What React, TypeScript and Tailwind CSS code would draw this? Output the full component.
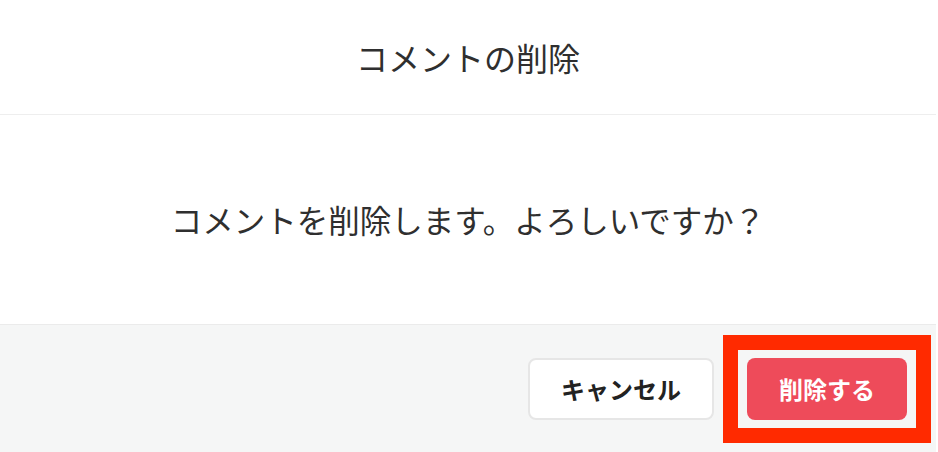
export default function App() {
  return (
    <div className="w-[938px] h-[452px] bg-white overflow-hidden font-['Noto_Sans_CJK_JP',sans-serif] text-[#333]">
      <div className="w-[936px] h-full flex flex-col">
        <div className="h-[115px] flex items-center justify-center border-b border-[#eeeeee]">
          <h2 className="text-[32px] leading-none font-normal text-[#2f2f2f]">コメントの削除</h2>
        </div>
        <div className="h-[209px] flex items-center justify-center">
          <p className="text-[31.5px] leading-none text-[#2f2f2f]">コメントを削除します。よろしいですか？</p>
        </div>
        <div className="flex-1 bg-[#f5f6f6] border-t border-[#ebebeb] flex items-start justify-end pt-[10px] pr-[5px]">
          <div className="flex items-center">
            <button className="w-[186px] h-[62px] mr-[9px] rounded-lg border-2 border-[#e6e6e6] bg-white text-[24px] font-bold text-[#222]">
              キャンセル
            </button>
            <div className="border-[15px] border-[#ff2a00] px-[9px] py-2">
              <button className="w-[160px] h-[62px] rounded-lg bg-[#ee4b5a] text-[24px] font-bold text-white">
                削除する
              </button>
            </div>
          </div>
        </div>
      </div>
    </div>
  );
}
